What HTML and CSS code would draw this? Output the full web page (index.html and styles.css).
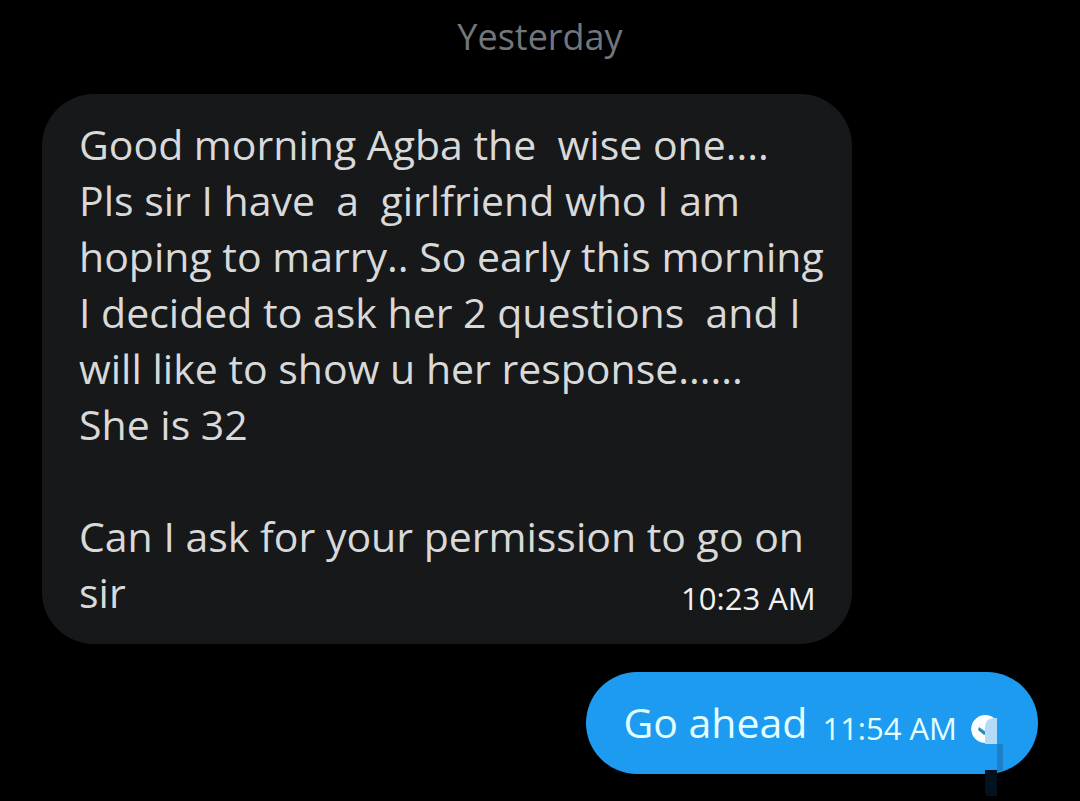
FILE: index.html
```html
<!DOCTYPE html>
<html lang="en">
<head>
    <meta charset="utf-8">
    <title>Messages</title>
    <link rel="stylesheet" href="styles.css">
</head>
<body>
    <main class="chat">
        <div class="day">Yesterday</div>

        <div class="bubble received">
            <p class="text">Good morning Agba the  wise one....
Pls sir I have  a  girlfriend who I am
hoping to marry.. So early this morning
I decided to ask her 2 questions  and I
will like to show u her response......
She is 32

Can I ask for your permission to go on</p>
            <div class="last-line">
                <span class="text">sir</span>
                <time class="time">10:23 AM</time>
            </div>
        </div>

        <div class="bubble sent">
            <span class="text">Go ahead</span>
            <time class="time">11:54 AM</time>
            <svg class="status" viewBox="0 0 32 82" aria-label="Sent">
                <path d="M24 5a14 14 0 1 0-10 24z" fill="#fff"/>
                <path d="M8 13l7 5v2l-2 1-6-5z" fill="#2b8fb5"/>
                <path d="M26 4h-4q-8 1-8 9v17h12z" fill="#b5dbfa"/>
                <path d="M26 30h6v26l-6 2z" fill="#1a80c8"/>
                <path d="M14 56h12v26h-9q-3 0-3-4z" fill="#04121f"/>
            </svg>
        </div>
    </main>
</body>
</html>
```

FILE: styles.css
```css
body {
    margin: 0;
    background: #000;
    font-family: "Open Sans", sans-serif;
}
.chat {
    display: flex;
    flex-direction: column;
    padding: 12px 42px 27px;
}
.day {
    margin-bottom: 32px;
    color: #72767d;
    font-size: 36px;
    line-height: 50px;
    text-align: center;
}
.bubble {
    position: relative;
    border-radius: 52px;
}
.text {
    margin: 0;
    font-size: 41px;
    line-height: 56px;
    white-space: pre-wrap;
}
.time {
    font-size: 31px;
    line-height: 40px;
    white-space: nowrap;
}
.received {
    align-self: flex-start;
    margin-bottom: 28px;
    padding: 22px 28px 24px 37px;
    background: #16181a;
    color: #d9d9d9;
}
.last-line {
    display: flex;
    align-items: center;
    justify-content: space-between;
    padding-right: 8px;
}
.received .time {
    margin-top: 12px;
    color: #f2f2f2;
}
.sent {
    display: flex;
    align-self: flex-end;
    align-items: center;
    padding: 22px 37px 24px;
    background: #1d9bf0;
    color: #e4ffff;
}
.sent .time {
    margin: 12px 44px 0 15px;
}
.status {
    position: absolute;
    top: 42px;
    right: 35px;
    width: 32px;
    height: 82px;
}
```
